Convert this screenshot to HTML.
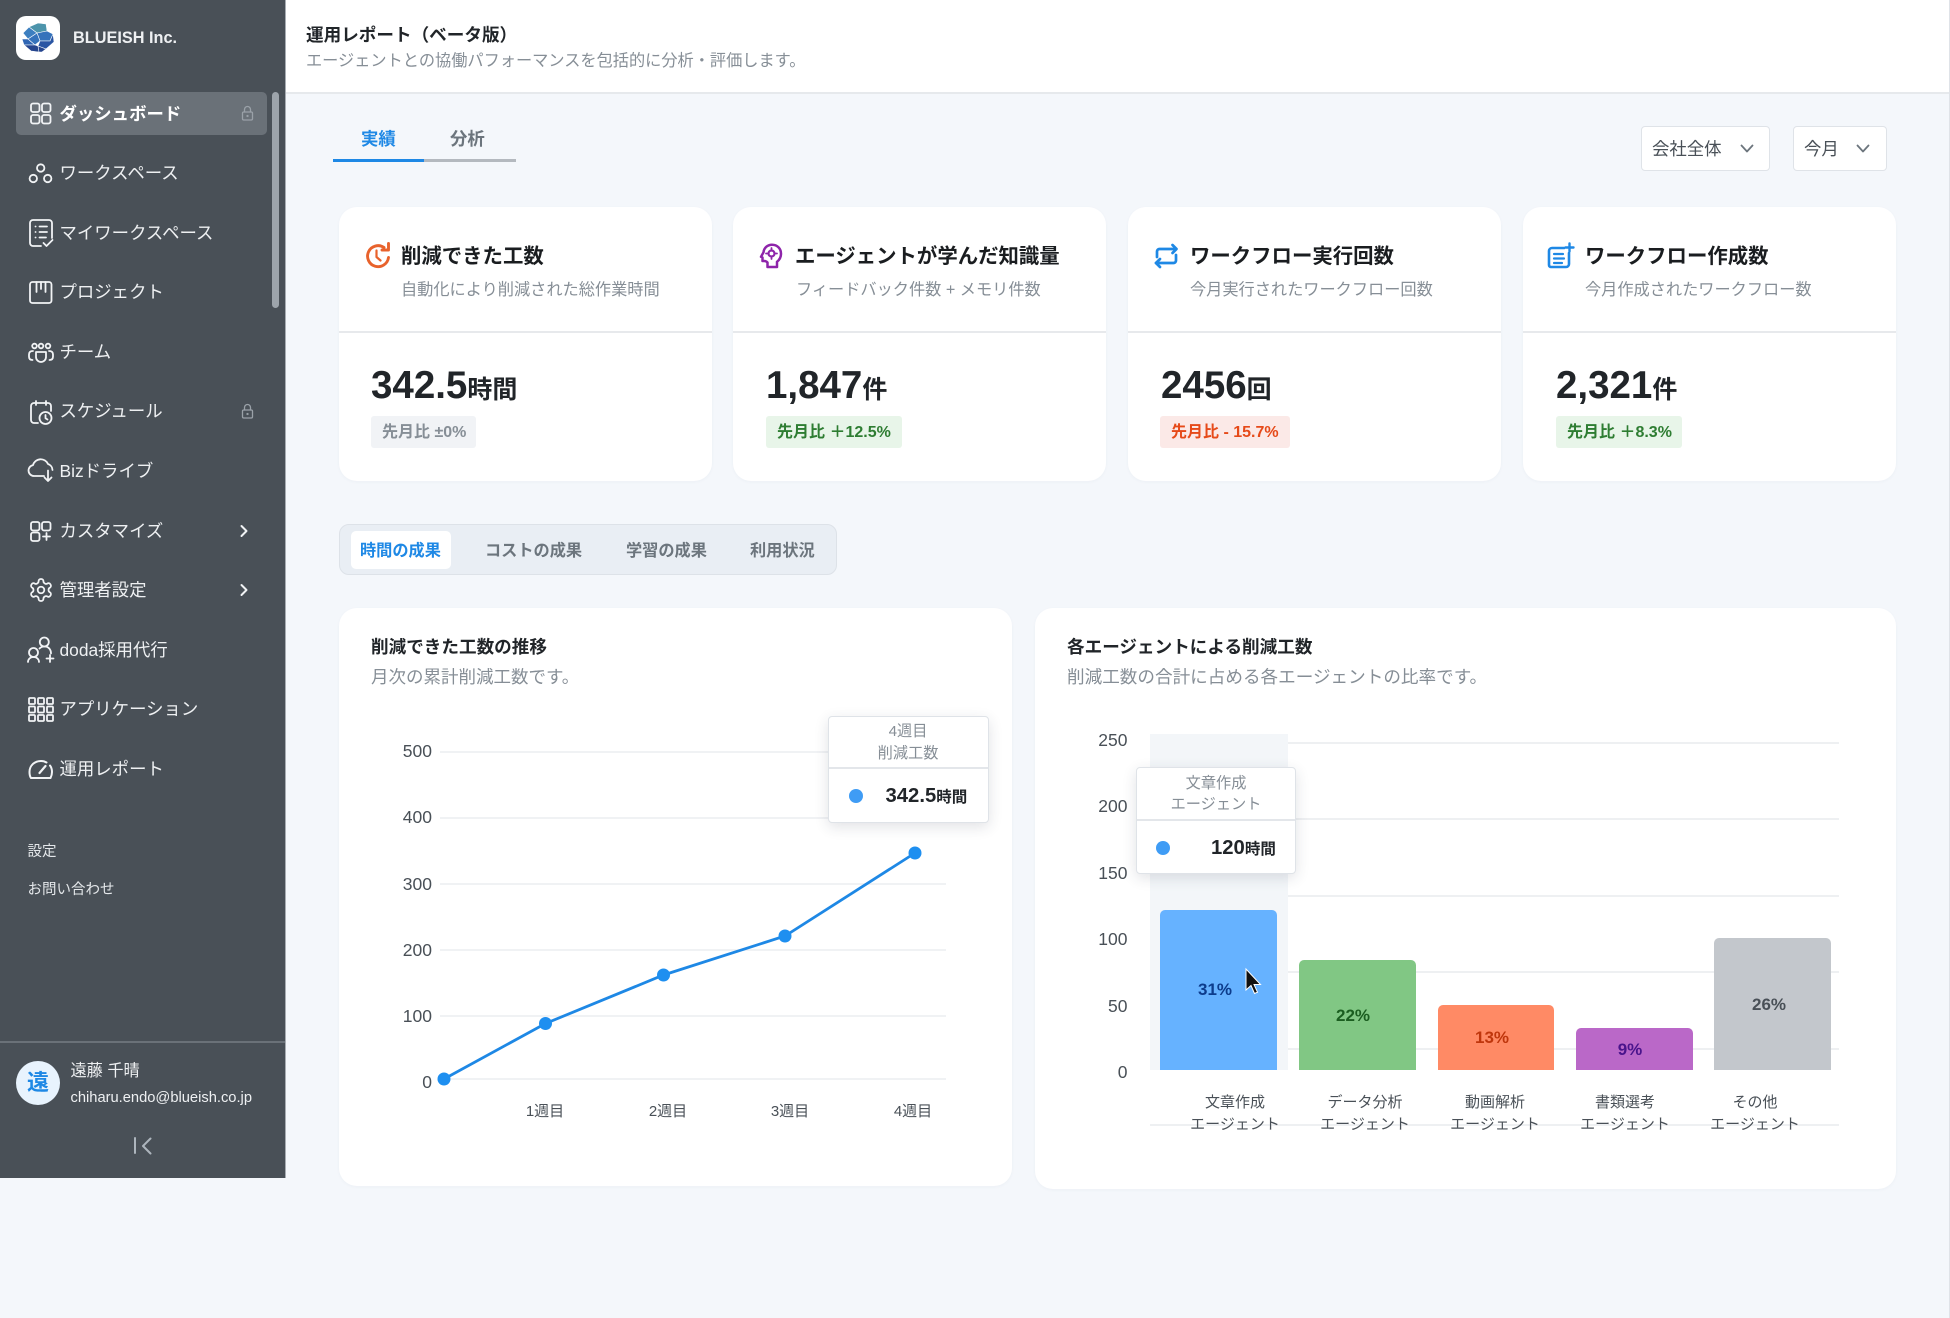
<!DOCTYPE html>
<html lang="ja"><head><meta charset="utf-8"><title>運用レポート</title>
<style>
*{box-sizing:border-box}
html,body{margin:0;padding:0}
body{width:1950px;height:1318px;position:relative;overflow:hidden;background:#f4f7fb;font-family:"Liberation Sans","Noto Sans CJK JP",sans-serif;color:#212529}
.t{position:absolute;white-space:nowrap;line-height:0;margin-top:.7px}
.b{position:absolute}
.card{position:absolute;background:#fff;border-radius:18px;box-shadow:0 1px 3px rgba(60,80,110,.04)}
.nav{font-size:17.4px;color:#eef0f2;left:59.5px}
.ct{font-size:20.4px;font-weight:700;color:#1a1d20;top:255px;margin-top:1.5px}
.cs{font-size:16.2px;color:#868e96;top:289px}
.v{font-size:38.5px;font-weight:700;color:#212529;top:385px;margin-top:.5px}
.v span{font-size:25px}
.bd{position:absolute;top:416px;height:32px;border-radius:3px;font-size:16px;font-weight:700;line-height:34px;padding-left:11px;white-space:nowrap}
.seg{font-size:16.2px;font-weight:700;color:#6c757d;top:550px}
.tip{position:absolute;background:#fff;border:1px solid #dfe3e8;border-radius:4px;box-shadow:0 4px 14px rgba(40,50,70,.14)}
.tl{font-size:15.2px;color:#868e96;text-align:center;transform:translateX(-50%);margin-top:1px}
.lo{margin-top:1.5px}
svg text{font-family:"Liberation Sans","Noto Sans CJK JP",sans-serif}
</style></head><body>

<!-- header -->
<div class="b" style="left:285px;top:0;width:1665px;height:94px;background:#fff;border-bottom:2px solid #e6e9ec"></div>
<div class="b" style="left:1949px;top:0;width:1px;height:1318px;background:#dfe3e8"></div>
<div class="t" style="left:306px;top:34px;font-size:17.6px;font-weight:700;color:#212529">運用レポート（ベータ版）</div>
<div class="t" style="left:306px;top:60px;font-size:16.2px;color:#868e96">エージェントとの協働パフォーマンスを包括的に分析・評価します。</div>

<!-- sidebar -->
<div class="b" style="left:0;top:0;width:286px;height:1178px;background:#495057;border-right:1px solid #a8adb3"></div>
<div class="b" style="left:16px;top:92px;width:251px;height:43px;background:#6a7178;border-radius:5px"></div>
<div class="b" style="left:272px;top:92px;width:7px;height:216px;background:#9da4ab;border-radius:4px"></div>
<div class="b" style="left:0;top:1041px;width:285px;height:2px;background:#6a7178"></div>

<div class="b" style="left:16px;top:16px;width:44px;height:44px;background:#fff;border-radius:10px"></div>
<svg class="b" style="left:0;top:0" width="285" height="1178" viewBox="0 0 285 1178" fill="none" stroke="#f1f3f5" stroke-width="1.8" stroke-linecap="round" stroke-linejoin="round">
 <!-- logo -->
 <g stroke="#fff" stroke-width=".55">
  <polygon points="29,27 38,23 46,24 47,31 37,33" fill="#4d94ab"/>
  <polygon points="23,33 29,27 37,33 28,39" fill="#3d7fc0"/>
  <polygon points="37,33 47,31 53,34 50,41 40,41" fill="#3673bb"/>
  <polygon points="22,39 28,39 35,45 24,45" fill="#2f66b4"/>
  <polygon points="28,39 37,33 40,41 35,45" fill="#3673bb"/>
  <polygon points="40,41 50,41 53,34 54,42 46,49 38,46" fill="#2a55a3"/>
  <polygon points="24,45 35,45 38,46 39,52 31,51" fill="#26468e"/>
  <polygon points="38,46 46,49 42,52 39,52" fill="#26468e"/>
 </g>
 <!-- dashboard -->
 <rect x="31" y="103.5" width="8.5" height="8.5" rx="2"/><rect x="42" y="103.5" width="8.5" height="8.5" rx="2"/><rect x="31" y="115" width="8.5" height="8.5" rx="2"/><rect x="42" y="115" width="8.5" height="8.5" rx="2"/>
 <!-- workspace -->
 <circle cx="40.7" cy="168" r="3.7"/><circle cx="33.3" cy="178.5" r="3.7"/><circle cx="47.7" cy="178.5" r="3.7"/>
 <!-- my workspace -->
 <path d="M41 246H33a3 3 0 0 1-3-3V223a3 3 0 0 1 3-3H49a3 3 0 0 1 3 3V238"/>
 <path d="M35.5 226.5h.1M35.5 232h.1M35.5 237.5h.1M39.5 226.5H47M39.5 232H47M39.5 237.5H46M43.5 243l3 3 6-6"/>
 <!-- project -->
 <rect x="30" y="282" width="21.5" height="21" rx="2.5"/><path d="M36.5 282v10M41 282v7M45.5 282v10"/>
 <!-- team -->
 <circle cx="34.5" cy="346" r="2.3"/><circle cx="41" cy="346" r="2.3"/><circle cx="48" cy="346" r="2.3"/>
 <path d="M36 352h10v5a5 5 0 0 1-10 0zM33 351c-3 0-4 1.500-4 3.500v2c0 2 1 3.500 3.500 3.500M49 351c3 0 4 1.500 4 3.500v2c0 2-1 3.500-3.500 3.500"/>
 <!-- schedule -->
 <path d="M38 423H34a3 3 0 0 1-3-3V406a3 3 0 0 1 3-3H48a3 3 0 0 1 3 3V411M36 401v4M46 401v4"/>
 <circle cx="45.500" cy="418" r="6"/><path d="M45.500 415v3.200l2 1.300"/>
 <!-- biz -->
 <path d="M44 476H34a5.500 5.500 0 0 1-1-10.900 8 8 0 0 1 15-1.100 6.500 6.500 0 0 1 4.500 6M48 470.500V481M44.500 477.500l3.500 3.500 3.500-3.500"/>
 <!-- customize -->
 <rect x="31" y="522" width="8.500" height="8.500" rx="2"/><rect x="42" y="522" width="8.500" height="8.500" rx="2"/><rect x="31" y="532.500" width="8.500" height="8.500" rx="2"/><path d="M46.500 533v7M43 536.500h7"/>
 <!-- gear -->
 <g transform="translate(27.8 576.800) scale(1.1)" stroke-width="1.600"><path d="M12.220 2h-.44a2 2 0 0 0-2 2v.18a2 2 0 0 1-1 1.730l-.43.25a2 2 0 0 1-2 0l-.15-.08a2 2 0 0 0-2.730.73l-.22.38a2 2 0 0 0 .73 2.730l.15.1a2 2 0 0 1 1 1.720v.51a2 2 0 0 1-1 1.740l-.15.09a2 2 0 0 0-.73 2.730l.22.38a2 2 0 0 0 2.730.73l.15-.08a2 2 0 0 1 2 0l.43.25a2 2 0 0 1 1 1.730V20a2 2 0 0 0 2 2h.44a2 2 0 0 0 2-2v-.18a2 2 0 0 1 1-1.730l.43-.25a2 2 0 0 1 2 0l.15.08a2 2 0 0 0 2.730-.73l.22-.39a2 2 0 0 0-.73-2.730l-.15-.08a2 2 0 0 1-1-1.740v-.5a2 2 0 0 1 1-1.740l.15-.09a2 2 0 0 0 .73-2.730l-.22-.38a2 2 0 0 0-2.730-.73l-.15.08a2 2 0 0 1-2 0l-.43-.25a2 2 0 0 1-1-1.730V4a2 2 0 0 0-2-2z"/><circle cx="12" cy="12" r="3"/></g>
 <!-- doda -->
 <circle cx="44.300" cy="642" r="4.500"/><circle cx="33.500" cy="652.500" r="4.500"/>
 <path d="M28 662c0-3 2.500-5 5.500-5s5.500 2 5.500 5M39.500 648.500c1.500-1.500 3-2 5-2 4 0 6.500 3 6.500 7M50 655v7M46.500 658.500h7"/>
 <!-- apps -->
 <rect x="29" y="698" width="6" height="6" rx="1"/><rect x="38" y="698" width="6" height="6" rx="1"/><rect x="47" y="698" width="6" height="6" rx="1"/>
 <rect x="29" y="706.500" width="6" height="6" rx="1"/><rect x="38" y="706.500" width="6" height="6" rx="1"/><rect x="47" y="706.500" width="6" height="6" rx="1"/>
 <rect x="29" y="715" width="6" height="6" rx="1"/><rect x="38" y="715" width="6" height="6" rx="1"/><rect x="47" y="715" width="6" height="6" rx="1"/>
 <!-- report -->
 <path d="M31 778c-1.500-2-1.500-4-1.500-6 0-6.500 5-11 11.500-11 2.500 0 4 .5 5.500 1.500M50 765.500c1.500 2 2 4 2 6.500 0 2-.5 4-1.500 6H31" stroke-width="2"/>
 <path d="M39.500 773l6-7" stroke-width="2.200"/>
 <!-- locks -->
 <g stroke="#9aa1a8" stroke-width="1.300">
  <rect x="242.500" y="112" width="10" height="8" rx="1.200"/><path d="M244.500 112v-2.500a3 3 0 0 1 6 0v2.500"/><circle cx="247.500" cy="116" r=".5"/>
  <rect x="242.500" y="410" width="10" height="8" rx="1.200"/><path d="M244.500 410v-2.500a3 3 0 0 1 6 0v2.500"/><circle cx="247.500" cy="414" r=".5"/>
 </g>
 <!-- chevrons -->
 <path d="M241.500 526l5 5-5 5M241.500 585l5 5-5 5" stroke-width="2"/>
 <!-- collapse -->
 <path d="M135 1138v15M150.500 1138.500l-7.500 7.500 7.500 7.500" stroke="#adb5bd" stroke-width="2"/>
</svg>

<div class="t" style="left:73px;top:37px;font-size:16.3px;font-weight:700;color:#eef0f2">BLUEISH Inc.</div>
<div class="t nav" style="top:113px;font-weight:700;color:#fff">ダッシュボード</div>
<div class="t nav" style="top:172px">ワークスペース</div>
<div class="t nav" style="top:232px">マイワークスペース</div>
<div class="t nav" style="top:291px">プロジェクト</div>
<div class="t nav" style="top:351px">チーム</div>
<div class="t nav" style="top:410px">スケジュール</div>
<div class="t nav" style="top:470px">Bizドライブ</div>
<div class="t nav" style="top:530px">カスタマイズ</div>
<div class="t nav" style="top:589px">管理者設定</div>
<div class="t nav" style="top:649px">doda採用代行</div>
<div class="t nav" style="top:708px">アプリケーション</div>
<div class="t nav" style="top:768px">運用レポート</div>
<div class="t lo" style="left:27.5px;top:850px;font-size:14.5px;color:#e4e7ea">設定</div>
<div class="t lo" style="left:27.5px;top:888px;font-size:14.5px;color:#e4e7ea">お問い合わせ</div>
<div class="b" style="left:16px;top:1061px;width:44px;height:44px;border-radius:50%;background:#e8f3fd;color:#1e88e5;font-size:22px;font-weight:700;line-height:44px;text-align:center">遠</div>
<div class="t lo" style="left:70.5px;top:1069px;font-size:16.2px;color:#eef0f2">遠藤 千晴</div>
<div class="t" style="left:70.5px;top:1097px;font-size:14.7px;color:#eef0f2">chiharu.endo@blueish.co.jp</div>

<!-- top tabs -->
<div class="t" style="left:361px;top:138px;font-size:17.4px;font-weight:700;color:#1e88e5">実績</div>
<div class="t" style="left:450px;top:138px;font-size:17.4px;font-weight:700;color:#6c757d">分析</div>
<div class="b" style="left:424px;top:159px;width:92px;height:3px;background:#b4b9bf"></div>
<div class="b" style="left:333px;top:159px;width:91px;height:3px;background:#1e88e5"></div>

<!-- dropdowns -->
<div class="b" style="left:1641px;top:126px;width:129px;height:45px;background:#fff;border:1px solid #dfe3e8;border-radius:4px"></div>
<div class="t" style="left:1652px;top:148px;font-size:17.4px;color:#495057">会社全体</div>
<div class="b" style="left:1793px;top:126px;width:94px;height:45px;background:#fff;border:1px solid #dfe3e8;border-radius:4px"></div>
<div class="t" style="left:1804px;top:148px;font-size:17.4px;color:#495057">今月</div>
<svg class="b" style="left:0;top:0" width="1950" height="200" fill="none" stroke="#6c757d" stroke-width="1.800" stroke-linecap="round" stroke-linejoin="round"><path d="M1741.500 145.500l5.500 6 5.500-6M1857.500 145.500l5.500 6 5.500-6"/></svg>

<!-- KPI cards -->
<div class="card" style="left:339px;top:207px;width:373px;height:274px"></div>
<div class="card" style="left:733px;top:207px;width:373px;height:274px"></div>
<div class="card" style="left:1128px;top:207px;width:373px;height:274px"></div>
<div class="card" style="left:1523px;top:207px;width:373px;height:274px"></div>
<div class="b" style="left:339px;top:331px;width:373px;height:2px;background:#e7e9ec"></div>
<div class="b" style="left:733px;top:331px;width:373px;height:2px;background:#e7e9ec"></div>
<div class="b" style="left:1128px;top:331px;width:373px;height:2px;background:#e7e9ec"></div>
<div class="b" style="left:1523px;top:331px;width:373px;height:2px;background:#e7e9ec"></div>

<svg class="b" style="left:0;top:0" width="1950" height="300" fill="none" stroke-linecap="round" stroke-linejoin="round">
 <!-- clock -->
 <g stroke="#e8622c" stroke-width="2.900">
  <path d="M384 247.500a10.500 10.500 0 1 0 4.500 10"/>
  <path d="M376.500 250.500v6.500l4 3.500" stroke-width="2.200"/>
  <path d="M388.500 243.500v6.500h-6.500" stroke-width="2.900"/>
 </g>
 <!-- head -->
 <g stroke="#8e24aa" stroke-width="2.500">
  <path d="M767.500 267v-4.500c-1-1-2-1.500-3-1.500h-2v-3.500l-1.500-.7 2.500-4.500c.5-4.500 4-7.500 8.500-7.500 5.500 0 9 4 9 9 0 3.500-1.500 6-4 8v5.200z"/>
  <circle cx="771.500" cy="253.500" r="3" stroke-width="2.200"/>
  <path d="M771.500 248v1M771.500 258v1M766 253.500h1M776 253.500h1" stroke-width="1.800"/>
 </g>
 <!-- repeat -->
 <g stroke="#1e88e5" stroke-width="2.700">
  <path d="M1157 257v-5.500a2.500 2.500 0 0 1 2.500-2.500H1176"/><path d="M1172.500 245l4 4-4 4"/>
  <path d="M1176 255v5.500a2.500 2.500 0 0 1-2.500 2.500H1156"/><path d="M1160 259l-4 4 4 4"/>
 </g>
 <!-- doc plus -->
 <g stroke="#1e88e5" stroke-width="2.600">
  <path d="M1564 248h-12a3 3 0 0 0-3 3v14a2 2 0 0 0 2 2h15a3 3 0 0 0 3-3v-11"/>
  <path d="M1554 254h9M1554 258.500h10M1554 263h8" stroke-width="2.200"/>
  <path d="M1569.500 243.500v8M1565.500 247.500h8" stroke-width="2.400"/>
 </g>
</svg>

<div class="t ct" style="left:401px">削減できた工数</div>
<div class="t cs" style="left:401px">自動化により削減された総作業時間</div>
<div class="t v" style="left:371px">342.5<span>時間</span></div>
<div class="bd" style="left:371px;width:105px;background:#f1f3f6;color:#868e96">先月比 ±0%</div>

<div class="t ct" style="left:795px">エージェントが学んだ知識量</div>
<div class="t cs" style="left:796px">フィードバック件数 + メモリ件数</div>
<div class="t v" style="left:766px">1,847<span>件</span></div>
<div class="bd" style="left:766px;width:136px;background:#e8f5e9;color:#2e7d32">先月比 ＋12.5%</div>

<div class="t ct" style="left:1190px">ワークフロー実行回数</div>
<div class="t cs" style="left:1190px">今月実行されたワークフロー回数</div>
<div class="t v" style="left:1161px">2456<span>回</span></div>
<div class="bd" style="left:1160px;width:130px;background:#fbe9e7;color:#e64a19">先月比 - 15.7%</div>

<div class="t ct" style="left:1585px">ワークフロー作成数</div>
<div class="t cs" style="left:1585px">今月作成されたワークフロー数</div>
<div class="t v" style="left:1556px">2,321<span>件</span></div>
<div class="bd" style="left:1556px;width:126px;background:#e8f5e9;color:#2e7d32">先月比 ＋8.3%</div>

<!-- segmented -->
<div class="b" style="left:339px;top:524px;width:498px;height:51px;background:#e9eef4;border:1px solid #dde2e8;border-radius:10px"></div>
<div class="b" style="left:351px;top:531px;width:100px;height:38px;background:#fff;border-radius:5px"></div>
<div class="t seg" style="left:360px;color:#1e88e5">時間の成果</div>
<div class="t seg" style="left:485px">コストの成果</div>
<div class="t seg" style="left:626px">学習の成果</div>
<div class="t seg" style="left:750px">利用状況</div>

<!-- chart cards -->
<div class="card" style="left:339px;top:608px;width:673px;height:578px"></div>
<div class="card" style="left:1035px;top:608px;width:861px;height:581px"></div>
<div class="t" style="left:371px;top:646px;font-size:17.6px;font-weight:700;color:#212529">削減できた工数の推移</div>
<div class="t" style="left:371px;top:676px;font-size:17.5px;color:#868e96">月次の累計削減工数です。</div>
<div class="t" style="left:1067px;top:646px;font-size:17.6px;font-weight:700;color:#212529">各エージェントによる削減工数</div>
<div class="t" style="left:1067px;top:676px;font-size:17.6px;color:#868e96">削減工数の合計に占める各エージェントの比率です。</div>

<svg class="b" style="left:0;top:0" width="1950" height="1318">
 <!-- left chart -->
 <g stroke="#eceef1" stroke-width="1.500">
  <path d="M440 752H946M440 818H946M440 884H946M440 950H946M440 1016H946M440 1079H946"/>
 </g>
 <g fill="#495057" font-size="17.500" text-anchor="end">
  <text x="432" y="757">500</text><text x="432" y="823">400</text><text x="432" y="890">300</text><text x="432" y="956">200</text><text x="432" y="1022">100</text><text x="432" y="1088">0</text>
 </g>
 <g fill="#495057" font-size="15" text-anchor="middle">
  <text x="545" y="1116">1週目</text><text x="668" y="1116">2週目</text><text x="790" y="1116">3週目</text><text x="913" y="1116">4週目</text>
 </g>
 <polyline points="444,1079 545.500,1023.500 663.500,975 785,936 915,853" fill="none" stroke="#1e88e5" stroke-width="2.800"/>
 <g fill="#1e8ff0">
  <circle cx="444" cy="1079" r="6.500"/><circle cx="545.500" cy="1023.500" r="6.500"/><circle cx="663.500" cy="975" r="6.500"/><circle cx="785" cy="936" r="6.500"/><circle cx="915" cy="853" r="6.500"/>
 </g>

 <!-- right chart -->
 <g stroke="#e9ebee" stroke-width="1.500">
  <path d="M1150 743H1839M1150 819H1839M1150 896H1839M1150 972H1839M1150 1049H1839M1150 1125H1839"/>
 </g>
 <rect x="1150" y="734" width="138" height="336" fill="#f3f6f9"/>
 <g fill="#495057" font-size="17.500" text-anchor="end">
  <text x="1127.500" y="746">250</text><text x="1127.500" y="812">200</text><text x="1127.500" y="879">150</text><text x="1127.500" y="945">100</text><text x="1127.500" y="1012">50</text><text x="1127.500" y="1078">0</text>
 </g>
 <path d="M1160 1070V915a5 5 0 0 1 5-5h107a5 5 0 0 1 5 5v155z" fill="#66b2ff"/>
 <path d="M1299 1070V965a5 5 0 0 1 5-5h107a5 5 0 0 1 5 5v105z" fill="#81c784"/>
 <path d="M1438 1070V1010a5 5 0 0 1 5-5h106a5 5 0 0 1 5 5v60z" fill="#ff8a65"/>
 <path d="M1576 1070V1033a5 5 0 0 1 5-5h107a5 5 0 0 1 5 5v37z" fill="#ba68c8"/>
 <path d="M1714 1070V943a5 5 0 0 1 5-5h107a5 5 0 0 1 5 5v127z" fill="#c3c7cc"/>
 <g font-size="17" font-weight="700" text-anchor="middle">
  <text x="1215" y="995" fill="#0d3c8c">31%</text>
  <text x="1353" y="1021" fill="#1b5e20">22%</text>
  <text x="1492" y="1043" fill="#bf360c">13%</text>
  <text x="1630" y="1055" fill="#4a148c">9%</text>
  <text x="1769" y="1010" fill="#495057">26%</text>
 </g>
 <g fill="#495057" font-size="15" text-anchor="middle">
  <text x="1235" y="1107">文章作成</text><text x="1235" y="1129">エージェント</text>
  <text x="1365" y="1107">データ分析</text><text x="1365" y="1129">エージェント</text>
  <text x="1495" y="1107">動画解析</text><text x="1495" y="1129">エージェント</text>
  <text x="1625" y="1107">書類選考</text><text x="1625" y="1129">エージェント</text>
  <text x="1755" y="1107">その他</text><text x="1755" y="1129">エージェント</text>
 </g>
 <!-- cursor -->
 <path d="M1246 969v21l5-4.500 3.500 8 3-1.300-3.500-7.700h6.500z" fill="#111" stroke="#fff" stroke-width="1"/>
</svg>

<!-- tooltip 1 -->
<div class="tip" style="left:828px;top:716px;width:161px;height:107px"></div>
<div class="b" style="left:829px;top:767px;width:159px;height:2px;background:#e3e6ea"></div>
<div class="t tl" style="left:908px;top:731px">4週目</div>
<div class="t tl" style="left:908px;top:753px">削減工数</div>
<div class="b" style="left:849px;top:789px;width:14px;height:14px;border-radius:50%;background:#3f9cf5"></div>
<div class="t" style="left:885.5px;top:795.5px;font-size:20.3px;font-weight:700;color:#212529">342.5<span style="font-size:15.5px">時間</span></div>

<!-- tooltip 2 -->
<div class="tip" style="left:1136px;top:767px;width:160px;height:107px"></div>
<div class="b" style="left:1137px;top:819px;width:158px;height:2px;background:#e3e6ea"></div>
<div class="t tl" style="left:1216px;top:783px">文章作成</div>
<div class="t tl" style="left:1216px;top:804px">エージェント</div>
<div class="b" style="left:1156px;top:841px;width:14px;height:14px;border-radius:50%;background:#3f9cf5"></div>
<div class="t" style="left:1211px;top:847.5px;font-size:20.3px;font-weight:700;color:#212529">120<span style="font-size:15.5px">時間</span></div>

</body></html>
